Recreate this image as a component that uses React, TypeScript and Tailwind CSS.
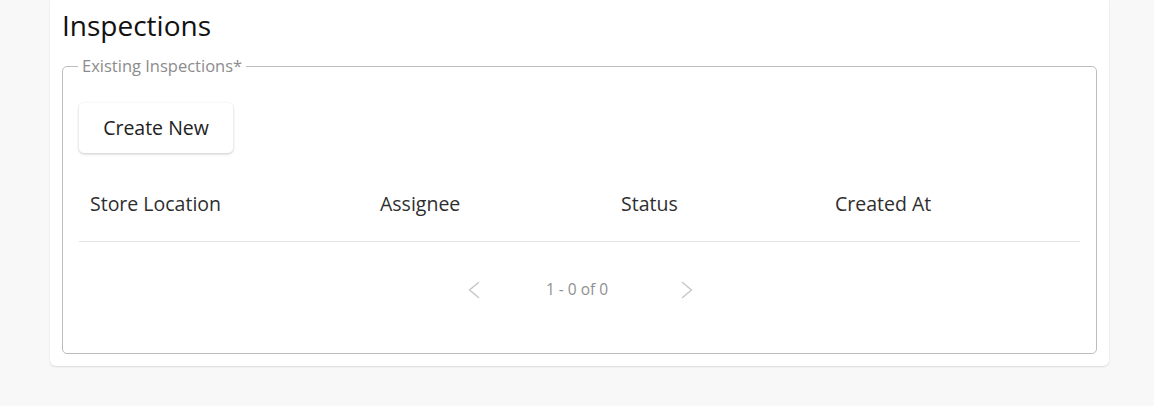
import React from "react";

function Chevron({ dir }: { dir: "left" | "right" }) {
  return (
    <svg width="12" height="18" viewBox="0 0 12 18" fill="none" stroke="#c8c8c8" strokeWidth="1.6" strokeLinecap="round" strokeLinejoin="round">
      {dir === "left" ? <path d="M10.5 1.5 L1.5 9 L10.5 16.5" /> : <path d="M1.5 1.5 L10.5 9 L1.5 16.5" />}
    </svg>
  );
}

export default function App() {
  return (
    <div className="w-[1154px] h-[406px] bg-[#f8f8f8] overflow-hidden font-['Open_Sans',sans-serif]">
      <div className="mx-[50px] w-[1059px] h-[366px] bg-white rounded-b-[6px] shadow-[0_1px_2px_rgba(0,0,0,0.12)] pl-[12px] pr-[12px] pt-[8px]">
        <h1 className="text-[28px] leading-[34px] text-[#111]">Inspections</h1>
        <fieldset className="mt-[17px] w-[1035px] h-[295px] border border-[#bdbdbd] rounded-[5px] px-[16px] pb-0 pt-0">
          <legend className="px-[4px] ml-[-1px] text-[16.5px] leading-[14px] text-[#8c8c8c]">Existing Inspections*</legend>
          <button className="mt-[30px] w-[154px] h-[50px] bg-white rounded-[5px] shadow-[0_1px_3px_rgba(0,0,0,0.22)] text-[19.5px] text-[#222]">
            Create New
          </button>
          <div className="mt-[13px] w-[1001px]">
            <div className="grid grid-cols-[301px_241px_214px_1fr] h-[76px] items-center border-b border-[#e3e3e3] text-[19.5px] text-[#2e2e2e]">
              <div className="pl-[11px]">Store Location</div>
              <div>Assignee</div>
              <div>Status</div>
              <div>Created At</div>
            </div>
            <div className="flex items-center justify-center h-[96px] text-[15.5px] text-[#8f8f8f] pl-[2px]">
              <Chevron dir="left" />
              <span className="ml-[66px] mr-[73px]">1 - 0 of 0</span>
              <Chevron dir="right" />
            </div>
          </div>
        </fieldset>
      </div>
    </div>
  );
}
